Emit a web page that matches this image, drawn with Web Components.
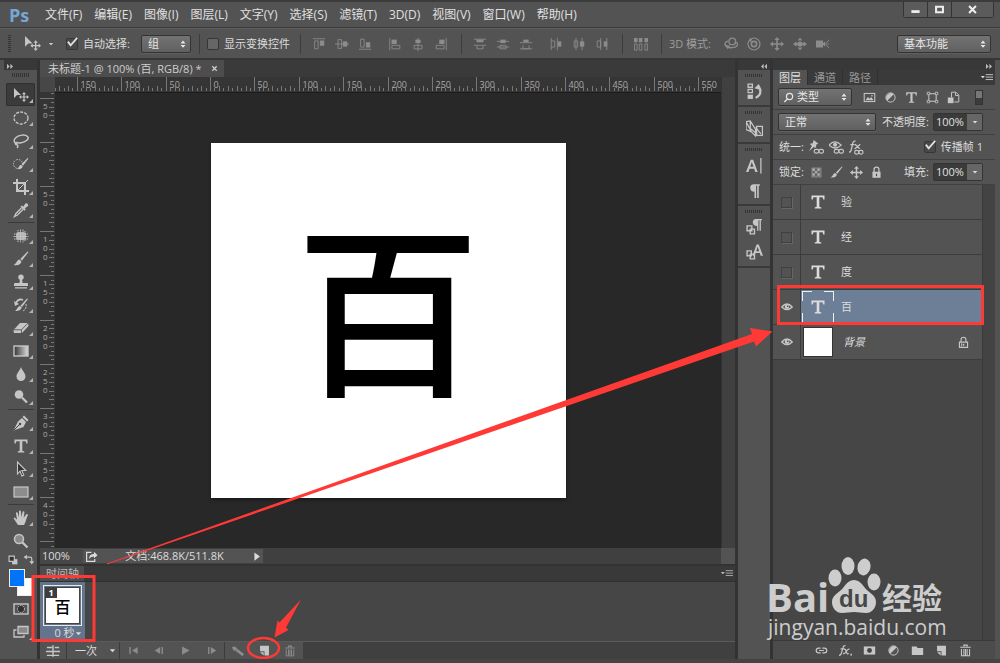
<!DOCTYPE html>
<html lang="zh-CN">
<head>
<meta charset="utf-8">
<title>未标题-1 @ 100%</title>
<style>
html, body {
  margin: 0;
  height: 100%;
}
body {
  font-family: "Open Sans", "Noto Sans CJK SC", sans-serif;
  font-size: 11px;
  line-height: 16px;
  color: #dcdcdc;
  background: #3a3a3a;
  overflow: hidden;
}
</style>
</head>
<body>
<ps-window>
  <ps-menubar slot="menu" items="文件(F),编辑(E),图像(I),图层(L),文字(Y),选择(S),滤镜(T),3D(D),视图(V),窗口(W),帮助(H)"></ps-menubar>
  <ps-options slot="options"></ps-options>
  <ps-toolbar></ps-toolbar>
  <ps-center>
    <ps-document name="未标题-1 @ 100% (百, RGB/8) *">百</ps-document>
    <ps-timeline></ps-timeline>
  </ps-center>
  <ps-dock></ps-dock>
  <ps-layers>
    <ps-layer type="text">验</ps-layer>
    <ps-layer type="text">经</ps-layer>
    <ps-layer type="text">度</ps-layer>
    <ps-layer type="text" visible selected>百</ps-layer>
    <ps-layer type="image" visible locked>背景</ps-layer>
  </ps-layers>
  <ps-watermark slot="over"></ps-watermark>
  <ps-marks slot="over"></ps-marks>
</ps-window>

<script>
// all icons live on a 16x16 grid
const ICONS = {
  move: '<path d="M1 1v10l3-3h4z"/><path d="M11 5l2 2.2h-1.4v2.2h2.2V8L16 10l-2.2 2V10.6h-2.2v2.2H13L11 15l-2-2.2h1.4v-2.2H8.200V12L6 10l2.200-2v1.400h2.200V7.200H9z"/>',
  marquee: '<ellipse cx="8" cy="8" rx="7" ry="6" fill="none" stroke="currentColor" stroke-width="1.3" stroke-dasharray="3 1.200"/>',
  lasso: '<path d="M4 11C1 10 0 7 3 4.500S12 1 14.500 3.500 12 9.500 7 10c-2 .2-3-.8-4-.3s-.6 2 .8 2 1.500 2 .2 3.300" fill="none" stroke="currentColor" stroke-width="1.500"/>',
  quick: '<circle cx="5" cy="8" r="4.500" fill="none" stroke="currentColor" stroke-dasharray="1.500 1.200"/><path d="M15.500 2.500l-5.300 7-1.600-1.400 6-6.100zM8 8.800l1.700 1.600c-.6 2.400-3 3.100-5.700 2.600 2-.8 1.800-3.500 4-4.200z"/>',
  crop: '<path d="M4 0v12h12M0 4h12v12" fill="none" stroke="currentColor" stroke-width="2"/><path d="M5 11L15 1" stroke="currentColor"/>',
  dropper: '<path d="M9 3.500l1.200 1.200 2-3c1.500-1.500 4 1 2.600 2.500l-3 2 1 1.200-1.400 1.300-4-4z"/><path d="M8.500 6L3 11.500 1.500 14.500l3-1.500L10 7.500" fill="none" stroke="currentColor" stroke-width="1.300"/>',
  patch: '<rect x="3" y="4" width="10" height="8" rx="3" opacity=".8"/><path d="M5 2v12M7.500 1.500v13M10 1.500v13M12 3v10M1 6h14M.5 8.500h15M1 11h14" stroke="currentColor" fill="none" stroke-dasharray="1.300 .5"/>',
  brush: '<path d="M15.500 1L9 9.500 7.300 8 14.500.5zM6.500 8.600l2 1.900c-.6 3-3.500 4.300-8 3.500 3-.8 3-4.800 6-5.400z"/>',
  stamp: '<circle cx="8" cy="3.200" r="2.700"/><path d="M7 5h2l.5 4H14q1 0 1 1v2H1v-2q0-1 1-1h4.500zM2 13.200h12v1.300H2z"/>',
  history: '<path d="M15 2l-6 8-1.500-1.300L14 1.500zM7 9l1.700 1.500c-.6 2.500-3 3.800-7 3.300 2.500-.6 2.600-4.300 5.300-4.800z"/><path d="M3 6c2-4 5-4 7-3" fill="none" stroke="currentColor" stroke-width="1.600"/><path d="M1 4l5 3-4 2z"/><path d="M13 7q1 5-3 7" fill="none" stroke="currentColor" stroke-dasharray="2 1"/>',
  eraser: '<path d="M7 3h8l.5 3L9 13H1l-.5-3z"/><path d="M1 9.800h7.500L15 3M8.500 10v3" fill="none" stroke="#606060"/>',
  gradient: '<defs><linearGradient id="g"><stop stop-color="#333"/><stop offset="1" stop-color="#ddd"/></linearGradient></defs><rect x="1" y="3" width="14" height="10" fill="url(#g)" stroke="currentColor" stroke-width="1.400"/>',
  drop: '<path d="M8 1c1 3.500 4.500 6 4.500 9.500a4.500 4.500 0 0 1-9 0C3.500 7 7 4.500 8 1z"/>',
  dodge: '<circle cx="6" cy="5.500" r="4.300"/><path d="M9 8.500l5 5" stroke="currentColor" stroke-width="2.200"/>',
  pen: '<path d="M11 .5L15.500 5l-1.500 1.400-4.500-4.400zM9 3l4 4-2.500 5L.5 15.500 5 6.500z"/><path d="M1 15l5.500-5.500" stroke="#444"/><circle cx="7" cy="9" r="1.200" fill="#444"/>',
  type: '<path d="M1.500 1.500h13v4h-1.200l-.7-2.300H9.300v9.600l2 .6v1.100H4.700v-1.100l2-.6V3.200H3.400l-.7 2.300H1.500z"/>',
  arrow: '<path d="M4.500 1v12l2.500-3 1.800 5 2-.9L8.800 9.500h4z" fill="#333" stroke="currentColor" stroke-width="1.100"/>',
  rect: '<rect x="1" y="3" width="14" height="10" fill="#8d8d8d" stroke="currentColor" stroke-width="1.200"/>',
  hand: '<path d="M5 15L1 9c-.8-1.400.8-2 1.600-.8L4 9.700 3 3.500c-.2-1.500 1.500-1.700 1.900-.3L6 7.500V1.700c0-1.500 1.900-1.500 2 0l.3 5.600L9.500 2c.4-1.300 2.100-1 1.900.4l-.7 5.300L13 4.500c.9-1.200 2.400-.3 1.700 1L13 10c-.5 2-1 3.500-2 5z"/>',
  zoom: '<circle cx="6" cy="6" r="4.500" fill="#8a8a8a" stroke="currentColor" stroke-width="1.500"/><path d="M9.500 9.500l5 5" stroke="currentColor" stroke-width="2.300"/>',
  mask: '<rect x="1" y="3" width="14" height="10" fill="none" stroke="currentColor" stroke-width="1.400"/><circle cx="8" cy="8" r="3.500" fill="#333" stroke="currentColor" stroke-dasharray="1.500 1"/>',
  screens: '<path d="M5 2.500h10v7H5z" fill="#888" stroke="currentColor" stroke-width="1.300"/><path d="M3.500 6H1v7h10v-2" fill="none" stroke="currentColor" stroke-width="1.300"/>',
  reset: '<path d="M7 7h6v6H7z"/><path d="M3.500 3.500h6v6h-6z" fill="#333" stroke="currentColor" stroke-width="1.300"/>',
  swap: '<path d="M4 5h6q2 0 2 2v5" fill="none" stroke="currentColor" stroke-width="1.500"/><path d="M6 2v6L2 5zM9 10h6l-3 4z"/>',
  atop: '<path d="M1 2h14M3 4.500h4v9H3z" fill="none" stroke="currentColor"/><path d="M9 4h5v6H9z"/>',
  avmid: '<path d="M0 8h16M3.500 3h4v10h-4z" fill="none" stroke="currentColor"/><path d="M9 5h5v6H9z"/>',
  abottom: '<path d="M1 14h14M3 2.500h4v9H3z" fill="none" stroke="currentColor"/><path d="M9 6h5v6H9z"/>',
  aleft: '<path d="M2 1v14M4.500 9.500h9v4h-9z" fill="none" stroke="currentColor"/><path d="M4 3h6v5H4z"/>',
  ahmid: '<path d="M8 1v15M3.500 9.500h9v4h-9z" fill="none" stroke="currentColor"/><path d="M5 3h6v4H5z"/>',
  aright: '<path d="M14 1v14M2.500 9.500h9v4h-9z" fill="none" stroke="currentColor"/><path d="M6 3h6v5H6z"/>',
  dtop: '<path d="M1 2.500h14M1 9.500h14M4.500 9.500v4h7v-4" fill="none" stroke="currentColor"/><path d="M4 3h8v3H4z"/>',
  dvmid: '<path d="M1 5h14M1 11.500h14M4.500 9.500h7v4h-7z" fill="none" stroke="currentColor"/><path d="M5 3h6v4H5z"/>',
  dbottom: '<path d="M1 6.500h14M1 13.500h14M4.500 9.500v4h7v-4" fill="none" stroke="currentColor"/><path d="M5 3h6v3H5z"/>',
  dleft: '<path d="M2.500 1v14M9.500 1v14M2.500 4.500h4v7h-4" fill="none" stroke="currentColor"/><path d="M10 5h4v6h-4z"/>',
  dhmid: '<path d="M4.500 1v14M11.500 1v14M2.500 4.500h4v7h-4z" fill="none" stroke="currentColor"/><path d="M9 5h5v6H9z"/>',
  dright: '<path d="M6.500 1v14M13.500 1v14M2.500 4.500h4v7h-4z" fill="none" stroke="currentColor"/><path d="M10 5h4v6h-4z"/>',
  auto: '<path d="M0 1h4v5H0zM5.500 1h4v5h-4zM12 1h4v5h-4z"/><path d="M.5 8h3v7h-3zM6 8h3v7H6zM12.500 8h3v7h-3z" fill="none" stroke="currentColor"/>',
  orbit: '<circle cx="9.500" cy="5" r="3.800" fill="none" stroke="currentColor" stroke-width="1.500"/><path d="M5 4.500C1 5 0 9 3 11s9.500 1.500 12-1-1-4-3-3" fill="none" stroke="currentColor" stroke-width="1.600"/><path d="M2 9l5 1-3 4z"/>',
  roll: '<circle cx="8" cy="8" r="6.800" fill="none" stroke="currentColor" stroke-width="1.300"/><circle cx="8" cy="8" r="3" fill="none" stroke="currentColor" stroke-width="1.800"/><path d="M2 2h4L4 6z"/>',
  pan: '<path d="M8 0l3 3.500H8.900v3.600h3.600V5L16 8l-3.500 3V8.900H8.900v3.600H11L8 16l-3-3.500h2.100V8.900H3.500V11L0 8l3.500-3v2.100h3.600V3.500H5z"/>',
  slide: '<circle cx="8" cy="8" r="3"/><path d="M8 .5L10.500 4h-5zM8 15.500L10.500 12h-5zM0 8l4-3v2h8V5l4 3-4 3V9H4v2z"/>',
  camera: '<path d="M0 4h8v8H0zM8 7l2.500-2v6L8 9z"/><path d="M15 3l-4 5 4 5M13 8h2" fill="none" stroke="currentColor"/>',
  pic: '<rect x="1.500" y="3" width="13" height="10" fill="none" stroke="currentColor" stroke-width="1.300"/><path d="M3 11.500l3-4 2.200 2 1.800-2 3 4z"/><circle cx="11" cy="5.800" r="1"/>',
  adjust: '<circle cx="8" cy="8" r="5.700" fill="#555" stroke="currentColor" stroke-width="1.200"/><path d="M12 4a5.700 5.700 0 0 0-8 8z"/>',
  shape: '<path d="M3.500 3.500h9v9h-9z" fill="none" stroke="currentColor" stroke-width="1.300"/><path d="M1.500 1.500h3v3h-3zM11.500 1.500h3v3h-3zM1.500 11.500h3v3h-3zM11.500 11.500h3v3h-3z" fill="#535353" stroke="currentColor"/>',
  smart: '<path d="M5.500 8V1.500H11l3.500 3.500v8.500H9M10.500 2v3.500H14" fill="none" stroke="currentColor" stroke-width="1.200"/><path d="M1 8h7v7H1z"/>',
  pin: '<path d="M5 0l5 4-2 .5L7 8.500 5 7.500 0 12l3-5.500L1 4l3-.5z"/><rect x="5.500" y="10" width="5" height="4" rx="2" fill="none" stroke="currentColor" stroke-width="1.200"/><rect x="10.500" y="10" width="5" height="4" rx="2" fill="none" stroke="currentColor" stroke-width="1.200"/>',
  eyelink: '<path d="M0 5.500q6-7 13 0-6 6-13 0" fill="none" stroke="currentColor" stroke-width="1.400"/><circle cx="6.500" cy="5" r="2.200"/><rect x="5.500" y="10" width="5" height="4" rx="2" fill="none" stroke="currentColor" stroke-width="1.200"/><rect x="10.500" y="10" width="5" height="4" rx="2" fill="none" stroke="currentColor" stroke-width="1.200"/>',
  fxlink: '<path d="M0 13q2 0 2.500-3L4 3.500Q4.500 .8 7 1.300M1.500 5h4.500M6.500 4.500l5 5M12 4.500l-6 5" fill="none" stroke="currentColor" stroke-width="1.400"/><rect x="6" y="11" width="4.500" height="4" rx="2" fill="none" stroke="currentColor" stroke-width="1.200"/><rect x="10.500" y="11" width="4.500" height="4" rx="2" fill="none" stroke="currentColor" stroke-width="1.200"/>',
  fx: '<path d="M0 14q2.500 0 3-3L5 4.500Q5.500 1.500 8 2M2 6h5M6 6.500q2-1 3 3t3 2M13 6.500q-2-1-4 2.500t-4 2.500" fill="none" stroke="currentColor" stroke-width="1.500"/><path d="M14 12h2v2h-2z"/>',
  checker: '<rect x="2.500" y="2.500" width="11" height="11" fill="#666" stroke="#999"/><path d="M3 3h3v3H3zM9 3h3v3H9zM6 6h3v3H6zM3 9h3v3H3zM9 9h3v3H9z" fill="#aaa"/>',
  cross: '<path d="M8 0l3 3.500H8.900v3.600h3.600V5L16 8l-3.500 3V8.900H8.900v3.600H11L8 16l-3-3.500h2.100V8.900H3.500V11L0 8l3.500-3v2.100h3.600V3.500H5z"/>',
  lock: '<path d="M5 8V4.500q0-3 3-3t3 3V8" fill="none" stroke="currentColor" stroke-width="1.600"/><path d="M3 7h10v7.500H3z"/><path d="M7.300 9.500h1.400v3H7.300z" fill="#444"/>',
  lockthin: '<path d="M5 8V4.500q0-3 3-3t3 3V8M3 7.500h10v6.500H3z" fill="none" stroke="currentColor" stroke-width="1.400"/><path d="M7 9.500h2v2.500H7zM5 9h1v4H5z"/>',
  eye: '<path d="M1 8q7-8 14 0-7 7-14 0z" fill="none" stroke="currentColor" stroke-width="1.700"/><circle cx="8" cy="7.800" r="3"/><circle cx="9" cy="7" r="1" fill="#333"/>',
  link: '<path d="M7 5H4.500a3 3 0 0 0 0 6H7M9 5h2.500a3 3 0 0 1 0 6H9M5 8h6" fill="none" stroke="currentColor" stroke-width="1.500"/>',
  addmask: '<path d="M1 3h14v10H1z"/><circle cx="8" cy="8" r="3" fill="#444"/>',
  folder: '<path d="M1 3h6l1 2h7v8.500H1z"/>',
  page: '<path d="M2.500 2h11v12H8v-5H2.500z"/><path d="M2.500 10H7v4z"/>',
  trash: '<path d="M6 3V1.500h4V3M1.500 4h13" fill="none" stroke="currentColor" stroke-width="1.500"/><path d="M3 6v8.500h10V6M6 6v8M8 6v8M10 6v8" fill="none" stroke="currentColor" stroke-width="1.300"/>',
  histpanel: '<path d="M2 1h4v3H2zM2 6h4v3H2z" fill="none" stroke="currentColor" stroke-width="1.200"/><path d="M1.500 11h5v4h-5z"/><path d="M9 14q6-3 4-8" fill="none" stroke="currentColor" stroke-width="2"/><path d="M8 5l4-4 3 6z"/>',
  notes: '<path d="M0 1.500L4 .8l5 8V15l-4-4zM0 1.500V9l5 2M4 .8V8l5 4" fill="none" stroke="currentColor" stroke-width="1.200"/><rect x="10" y="6" width="5.500" height="8.500" fill="none" stroke="currentColor" stroke-width="1.200"/><path d="M9 7l5 6" stroke="currentColor" stroke-width="1.200"/>',
  charA: '<path d="M0 14L4.500 2.500h2.200L11 14H8.700l-1-3H3.300l-1 3zM4 9.200h3L5.500 4.700z"/><path d="M14 1v14.500" stroke="currentColor" stroke-width="1.200"/>',
  para: '<path d="M7 2h6v1.500h-1V15h-1.500V3.500H9.500V15H8V9a3.500 3.500 0 0 1-1-7z"/>',
  parastyle: '<path d="M9 0h6v1.200h-1V11h-1.300V1.200h-1V11H10.500V6.500A3.200 3.200 0 0 1 9 0z"/><path d="M1 6.500h4.500V11H1zM4 9.500h4V14H4z" fill="none" stroke="currentColor" stroke-width="1.300"/>',
  charstyle: '<path d="M6 11l4-10.500h2L16 11h-2.200l-.8-2.500H9L8.200 11zM9.600 6.800h2.800L11 2.600z"/><path d="M1 6.500h4V11H1zM4 9.500h4V14H4z" fill="none" stroke="currentColor" stroke-width="1.300"/>',
  share: '<path d="M8 3H2v11h10v-3" fill="none" stroke="currentColor" stroke-width="1.500"/><path d="M5 11q0-6 6-6V2l4.500 4.500L11 10V8Q7 8 5 11z"/>',
  convert: '<path d="M1 4h6M0 8.500h16M1 13h14M10 4h5M8 1.500v13" fill="none" stroke="currentColor" stroke-width="1.600"/>',
  first: '<path d="M2 3h2v10H2zM14 3v10L6 8z"/>',
  prev: '<path d="M9 3v10L1 8zM11 3h2v10h-2z"/>',
  play: '<path d="M3 2v12l11-6z"/>',
  next: '<path d="M7 3v10l8-5zM3 3h2v10H3z"/>',
  tween: '<path d="M0 3q4-3 7 2l-3 3q-3-1-4-5zM7 5l9 7-2 3-9-7z"/>',
  menu: '<path d="M1 6h5L3.500 9z"/><path d="M7 4.500h9M7 7.500h9M7 10.500h9" stroke="currentColor"/>',
  dleftarr: '<path d="M7.500 5v7L4 8.500zM12 5v7L8.500 8.500z"/>',
  drightarr: '<path d="M4 5v7l3.500-3.500zM8.500 5v7L12 8.500z"/>',
  caret: '<path d="M2 5h12l-6 7z"/>',
  right: '<path d="M5 2v12l8-6z"/>',
  updown: '<path d="M4 7h8L8 2.500zM4 9.500h8L8 14z"/>',
  search: '<circle cx="9.500" cy="6.500" r="4.500" fill="none" stroke="currentColor" stroke-width="1.700"/><path d="M6.500 10L2 14.500" stroke="currentColor" stroke-width="2"/>',
  min: '<path d="M2 9h12v4H2z"/>',
  max: '<path d="M3 4h10v8H3z" fill="none" stroke="currentColor" stroke-width="3"/>',
  close: '<path d="M3 3l10 10M13 3L3 13" stroke="currentColor" stroke-width="3"/>'
};

const svg = (name, size = 14) =>
  `<svg class="icon" width="${size}" height="${size}" viewBox="0 0 16 16" fill="currentColor" aria-hidden="true">${ICONS[name]}</svg>`;

const BASE = `
  :host { display: block; box-sizing: border-box; }
  *, *::before, *::after { box-sizing: border-box; }
  .icon { display: block; flex: none; }
  button, input, select { font: inherit; color: inherit; }
  .row { display: flex; align-items: center; }
  .fill { flex: 1; }
`;

// shadow root + markup for every element on the page
class PsElement extends HTMLElement {
  constructor() {
    super();
    this.attachShadow({ mode: 'open' });
  }
  connectedCallback() {
    const template = document.createElement('template');
    template.innerHTML = `<style>${BASE}${this.css()}</style>${this.html()}`;
    this.shadowRoot.replaceChildren(template.content.cloneNode(true));
  }
  css() { return ''; }
  html() { return '<slot></slot>'; }
}

class PsButton extends PsElement {
  css() {
    return `
    :host { flex: none; width: 23px; height: 23px; color: #c6c6c6; }
    :host([dim]) { color: #8c8c8c; }
    button { position: relative; display: flex; align-items: center; justify-content: center;
      width: 100%; height: 100%; padding: 0; border: 0; border-radius: 2px; background: none; }
    :host([active]) button { background: #3b3b3b; box-shadow: inset 0 0 0 1px #303030; }
    .flag { position: absolute; right: 2px; bottom: 3px; border: 2px solid transparent;
      border-right-color: #b5b5b5; border-bottom-color: #b5b5b5; }
    `;
  }
  html() {
    return `<button type="button" aria-label="${this.getAttribute('label') || this.getAttribute('icon')}">
      ${svg(this.getAttribute('icon'), this.getAttribute('size') || 14)}
      ${this.hasAttribute('flag') ? '<span class="flag"></span>' : ''}</button>`;
  }
}

class PsSelect extends PsElement {
  css() {
    return `
    :host { flex: none; }
    .box { position: relative; display: flex; align-items: center; height: 18px; color: #e6e6e6;
      border: 1px solid #333; border-radius: 2px; background: linear-gradient(#737373, #606060);
      box-shadow: 0 1px 0 #606060; }
    select { appearance: none; flex: 1; min-width: 0; height: 16px; line-height: 16px; padding: 0 14px 0 6px;
      border: 0; background: none; outline: none; }
    .lead { display: flex; padding-left: 4px; margin-right: -3px; }
    .arrows { position: absolute; right: 2px; pointer-events: none; }
    `;
  }
  html() {
    const lead = this.getAttribute('icon');
    return `<div class="box">${lead ? `<span class="lead">${svg(lead, 11)}</span>` : ''}
      <select aria-label="${this.getAttribute('label')}"><option>${this.getAttribute('value')}</option></select>
      <span class="arrows">${svg('updown', 10)}</span></div>`;
  }
}

class PsCheck extends PsElement {
  css() {
    return `
    :host { flex: none; }
    label { display: flex; align-items: center; gap: 5px; }
    .box { position: relative; display: flex; width: 12px; height: 12px; }
    input { appearance: none; margin: 0; width: 12px; height: 12px; border: 1px solid #363636;
      border-radius: 2px; background: #666; }
    svg { position: absolute; left: 0; top: -2px; display: none; pointer-events: none; }
    input:checked { background: #494949; }
    input:checked + svg { display: block; }
    `;
  }
  html() {
    return `<label><span class="box"><input type="checkbox" ${this.hasAttribute('checked') ? 'checked' : ''}>
      <svg width="13" height="13" viewBox="0 0 14 14"><path d="M2 6l3 4 7-8" fill="none" stroke="#e0e0e0" stroke-width="2"/></svg></span>
      <span><slot></slot></span></label>`;
  }
}

class PsPercent extends PsElement {
  css() {
    return `
    :host { flex: none; }
    .box { display: flex; height: 18px; width: 50px; border: 1px solid #333; border-radius: 2px; }
    input { width: 33px; padding: 0 2px; border: 0; background: #3b3b3b; color: #e0e0e0; outline: none; }
    button { flex: 1; display: flex; align-items: center; justify-content: center; padding: 0; border: 0; background: #666; }
    `;
  }
  html() {
    return `<div class="box"><input type="text" value="100%" aria-label="${this.getAttribute('label')}">
      <button type="button" aria-label="展开">${svg('caret', 6)}</button></div>`;
  }
}

class PsWindow extends PsElement {
  css() {
    return `
    :host { position: relative; display: flex; flex-direction: column; height: 100vh;
      background: #535353; border-top: 2px solid #3b3b3b; border-bottom: 4px solid #444; overflow: hidden; }
    .work { display: flex; flex: 1; min-height: 0; margin: 0 5px 0 4px; gap: 3px; background: #333; }
    `;
  }
  html() {
    return `<slot name="menu"></slot><slot name="options"></slot><div class="work"><slot></slot></div><slot name="over"></slot>`;
  }
}

class PsMenubar extends PsElement {
  css() {
    return `
    :host { height: 26px; padding: 0 6px 0 9px; font-size: 12px; border-bottom: 1px solid #3a3a3a; }
    header { display: flex; align-items: center; height: 100%; }
    .logo { width: 36px; font: bold 18px/24px "Open Sans", sans-serif; color: #76a6d6; }
    nav { display: flex; gap: 12px; flex: 1; }
    a { color: #e0e0e0; text-decoration: none; white-space: nowrap; }
    .sys { display: flex; align-self: flex-start; height: 16px; border: 1px solid #343434; border-top: 0; border-radius: 0 0 3px 3px; color: #eee; }
    .sys button { display: flex; align-items: center; justify-content: center; width: 24px; padding: 0; border: 0;
      border-right: 1px solid #343434; background: #5b5b5b; }
    .sys button:last-child { width: 41px; border-right: 0; }
    `;
  }
  html() {
    const links = this.getAttribute('items').split(',').map(t => `<a href="#">${t}</a>`).join('');
    return `<header><span class="logo">Ps</span><nav>${links}</nav>
      <div class="sys"><button type="button" aria-label="最小化">${svg('min', 11)}</button>
      <button type="button" aria-label="最大化">${svg('max', 11)}</button>
      <button type="button" aria-label="关闭">${svg('close', 11)}</button></div></header>`;
  }
}

class PsOptions extends PsElement {
  css() {
    return `
    :host { height: 32px; padding: 0 9px 0 8px; border-top: 1px solid #5f5f5f; border-bottom: 2px solid #363636; }
    .row { height: 100%; }
    .grip { width: 3px; height: 18px; background: repeating-linear-gradient(#333 0 1px, transparent 1px 2px); }
    .sep { flex: none; width: 1px; height: 20px; margin: 0 7px 0 8px; background: #3c3c3c; }
    .move { display: flex; align-items: center; width: 47px; padding-left: 13px; gap: 7px; color: #c6c6c6; }
    .auto { margin-left: 8px; }
    .controls { margin-right: 2px; }
    .group + .group { margin-left: 7px; }
    .first { width: 50px; margin-left: 11px; }
    .mode { width: 51px; white-space: nowrap; color: #9d9d9d; }
    .space { width: 94px; }
    `;
  }
  html() {
    const group = names => `<div class="row group">${names.map(n => `<ps-button dim icon="${n}"></ps-button>`).join('')}</div>`;
    return `<div class="row"><span class="grip"></span>
      <span class="move">${svg('move', 17)}${svg('caret', 6)}</span>
      <ps-check class="auto" checked>自动选择:</ps-check>
      <ps-select class="first" label="自动选择" value="组"></ps-select>
      <span class="sep"></span>
      <ps-check class="controls">显示变换控件</ps-check>
      <span class="sep"></span>
      ${group(['atop', 'avmid', 'abottom'])}${group(['aleft', 'ahmid', 'aright'])}<span class="sep"></span>
      ${group(['dtop', 'dvmid', 'dbottom'])}${group(['dleft', 'dhmid', 'dright'])}<span class="sep"></span>
      ${group(['auto'])}<span class="sep"></span><span class="mode">3D 模式:</span>
      ${group(['orbit', 'roll', 'pan', 'slide', 'camera'])}<span class="fill"></span>
      <ps-select class="space" label="工作区" value="基本功能"></ps-select></div>`;
  }
}

class PsToolbar extends PsElement {
  css() {
    return `
    :host { flex: none; width: 33px; background: #535353; }
    .head { height: 10px; background: #383838; color: #bbb; }
    .grip { width: 18px; height: 4px; margin: 3px auto 6px; background: repeating-linear-gradient(90deg, #333 0 1px, transparent 1px 2px); }
    .tools { display: flex; flex-direction: column; align-items: center; }
    ps-button { width: 29px; }
    hr { width: 26px; height: 1px; margin: 1px 0; border: 0; background: #3a3a3a; }
    .minis { display: flex; justify-content: center; gap: 2px; height: 15px; }
    .minis ps-button { width: 14px; height: 15px; }
    .swatches { display: grid; grid-template: repeat(3, 9px) / repeat(3, 8px); justify-content: center; margin: 2px 0 1px; }
    .swatches button { padding: 0; border: 1px solid #eee; }
    .fg { grid-area: 1 / 1 / 3 / 3; background: #0074f8; z-index: 1; }
    .bg { grid-area: 2 / 2 / 4 / 4; background: #fff; }
    `;
  }
  html() {
    const t = (names) => names.split(' ').map(n =>
      `<ps-button icon="${n}" size="16" ${n === 'zoom' || n === 'mask' ? '' : 'flag'} ${n === 'move' ? 'active' : ''}></ps-button>`).join('');
    return `<div class="head">${svg('drightarr', 12)}</div><div class="grip"></div>
      <div class="tools">${t('move marquee lasso quick crop dropper')}<hr>
      ${t('patch brush stamp history eraser gradient drop dodge')}<hr>
      ${t('pen type arrow rect')}<hr>${t('hand zoom')}</div>
      <div class="minis"><ps-button icon="reset" size="14"></ps-button><ps-button icon="swap" size="13"></ps-button></div>
      <div class="swatches"><button type="button" class="fg" aria-label="前景色"></button><button type="button" class="bg" aria-label="背景色"></button></div>
      <div class="tools">${t('mask screens')}</div>`;
  }
}

class PsCenter extends PsElement {
  css() {
    return `:host { display: flex; flex-direction: column; flex: 1; min-width: 0; gap: 2px; }`;
  }
}

// Ruler whose zero sits half a page before the middle of the view.
class PsRuler extends PsElement {
  css() {
    return `
    :host { background: #353535; overflow: hidden; }
    svg { display: block; }
    line { stroke: #777; }
    text { font: 9px "Open Sans", sans-serif; fill: #aaa; }
    :host([axis=y]) text { font-size: 8px; }
    `;
  }
  html() {
    const vertical = this.getAttribute('axis') === 'y';
    const from = Number(this.getAttribute('from'));
    const to = Number(this.getAttribute('to'));
    let marks = '';
    for (let u = from; u <= to; u += 5) {
      const p = Math.round(u * 0.8875 - 178) + 0.5;
      const len = u % 50 === 0 ? 14 : u % 10 === 0 ? 5 : 3;
      marks += vertical
        ? `<line x1="${14 - len}" x2="14" y1="${p}" y2="${p}"/>`
        : `<line y1="${14 - len}" y2="14" x1="${p}" x2="${p}"/>`;
      // a label needs room before the ruler ends
      if (u % 50 === 0 && u + 15 <= to) {
        const label = String(Math.abs(u));
        marks += vertical
          ? [...label].map((d, i) => `<text x="3" y="${p + 10 + i * 9}">${d}</text>`).join('')
          : `<text x="${p + 3}" y="11">${label}</text>`;
      }
    }
    return `<svg width="100%" height="100%"><svg ${vertical ? 'y' : 'x'}="50%" overflow="visible">${marks}</svg></svg>`;
  }
}

class PsDocument extends PsElement {
  css() {
    return `
    :host { display: flex; flex-direction: column; flex: 1; min-height: 0; }
    .tabs { display: flex; height: 17px; background: #3a3a3a; }
    .tab { display: flex; align-items: center; gap: 7px; padding: 0 4px 0 8px; background: #4d4d4d; white-space: nowrap; color: #ccc; }
    .tab button { display: flex; padding: 2px; border: 0; background: none; }
    .view { flex: 1; min-height: 0; display: grid; grid-template: 15px minmax(0, 1fr) / 15px minmax(0, 1fr) 14px; }
    .corner { background: #474747; }
    .scroll { grid-area: 1 / 3 / 3 / 4; background: #404040; border-left: 1px solid #333; }
    .stage { display: flex; align-items: center; justify-content: center; background: #282828; overflow: hidden;
      border-top: 1px solid #1c1c1c; }
    .page { display: flex; align-items: center; justify-content: center; width: 355px; height: 355px; padding-bottom: 36px;
      background: #fff; color: #000; font: 500 184px/319px "Noto Sans CJK SC", sans-serif; box-shadow: 0 2px 3px #1a1a1a; }
    .status { display: flex; align-items: center; height: 16px; background: #404040; }
    .zoom { width: 43px; padding-left: 2px; background: #474747; }
    .info { display: flex; align-items: center; width: 180px; height: 14px; padding: 0 1px 0 2px; background: #535353; }
    .info span { flex: 1; text-align: center; }
    .end { width: 14px; height: 16px; background: #535353; }
    `;
  }
  html() {
    return `<div class="tabs"><div class="tab"><span>${this.getAttribute('name')}</span>
        <button type="button" aria-label="关闭文档">${svg('close', 7)}</button></div></div>
      <div class="view"><div class="corner"></div><ps-ruler axis="x" from="-175" to="565"></ps-ruler>
        <div class="scroll"></div><ps-ruler axis="y" from="-55" to="455"></ps-ruler>
        <div class="stage"><div class="page"><slot></slot></div></div></div>
      <div class="status"><span class="zoom">100%</span>
        <div class="info">${svg('share', 13)}<span>文档:468.8K/511.8K</span>${svg('right', 11)}</div>
        <div class="fill"></div><div class="end"></div></div>`;
  }
}

class PsTimeline extends PsElement {
  css() {
    return `
    :host { flex: none; background: #464646; }
    .tabs { display: flex; align-items: center; height: 15px; background: #393939; padding-right: 2px; color: #bbb; }
    .tab { width: 44px; height: 15px; padding-left: 6px; background: #4d4d4d; white-space: nowrap; }
    .frames { height: 60px; border-top: 1px solid #303030; }
    .frame { display: flex; flex-direction: column; align-items: center; width: 45px; height: 59px; padding-top: 3px; background: #64748c; }
    .thumb { position: relative; width: 39px; height: 41px; border: 1px solid #e8e8e8; padding: 1px; }
    .pic { display: flex; align-items: center; justify-content: center; height: 100%; background: #fff; color: #000;
      font: 500 16px/20px "Noto Sans CJK SC", sans-serif; border: 1px solid #444; }
    .num { position: absolute; left: 1px; top: 1px; width: 12px; height: 11px; background: #3d3d3d; font: bold 9px/11px "Open Sans", sans-serif; text-align: center; color: #fff; }
    .time { display: flex; align-items: center; height: 14px; padding: 0 0 0 11px; border: 0; background: none; }
    .bar { display: flex; align-items: center; height: 18px; background: #404040; border-top: 1px solid #5a5a5a; }
    .controls { display: flex; align-items: center; height: 17px; background: #535353; }
    .controls ps-button { width: 26px; height: 17px; }
    .sep { width: 1px; height: 17px; background: #3c3c3c; }
    .loop { position: relative; display: flex; align-items: center; width: 52px; }
    select { appearance: none; width: 100%; height: 16px; line-height: 16px; padding: 0 0 0 8px; border: 0; background: none; }
    .loop svg { position: absolute; right: 3px; pointer-events: none; }
    `;
  }
  html() {
    return `<div class="tabs"><span class="tab">时间轴</span><span class="fill"></span>${svg('menu', 13)}</div>
      <div class="frames"><div class="frame"><div class="thumb"><div class="pic">百</div><span class="num">1</span></div>
        <button class="time" type="button">0 秒${svg('caret', 7)}</button></div></div>
      <div class="bar"><div class="controls"><ps-button icon="convert"></ps-button><span class="sep"></span>
        <div class="loop"><select aria-label="循环"><option>一次</option></select>${svg('caret', 7)}</div><span class="sep"></span>
        <ps-button dim icon="first" size="11"></ps-button><ps-button dim icon="prev" size="11"></ps-button>
        <ps-button dim icon="play" size="11"></ps-button><ps-button dim icon="next" size="11"></ps-button><span class="sep"></span>
        <ps-button dim icon="tween" size="12"></ps-button><ps-button icon="page" size="13"></ps-button>
        <ps-button dim icon="trash" size="12"></ps-button></div></div>`;
  }
}

class PsDock extends PsElement {
  css() {
    return `
    :host { flex: none; width: 32px; background: #535353; }
    .head { display: flex; justify-content: flex-end; height: 10px; background: #383838; color: #bbb; }
    section { display: flex; flex-direction: column; align-items: center; padding: 1px 0; border-bottom: 2px solid #3a3a3a; }
    .grip { width: 18px; height: 3px; margin: 3px 0 2px; background: repeating-linear-gradient(90deg, #333 0 1px, transparent 1px 2px); }
    ps-button { height: 25px; }
    `;
  }
  html() {
    const group = names => `<section><span class="grip"></span>${names.map(n => `<ps-button icon="${n}" size="17"></ps-button>`).join('')}</section>`;
    return `<div class="head">${svg('dleftarr', 12)}</div>
      ${group(['histpanel'])}${group(['notes'])}${group(['charA', 'para'])}${group(['parastyle', 'charstyle'])}`;
  }
}

class PsLayers extends PsElement {
  css() {
    return `
    :host { display: flex; flex-direction: column; flex: none; width: 222px; background: #535353; }
    .head { display: flex; justify-content: flex-end; height: 10px; background: #383838; color: #bbb; }
    .tabs { display: flex; align-items: center; height: 15px; background: #3a3a3a; padding-right: 2px; }
    .tabs button { width: 35px; height: 15px; line-height: 15px; padding: 0; border: 0; border-right: 1px solid #303030; background: none; color: #999; }
    .tabs button[aria-selected=true] { background: #535353; color: #e0e0e0; }
    .line { display: flex; align-items: center; height: 25px; padding: 0 12px 0 5px; border-bottom: 1px solid #404040; white-space: nowrap; }
    .line ps-button { width: 20px; }
    .filters { display: flex; gap: 1px; margin-left: 7px; }
    .type { width: 74px; }
    .blend { width: 98px; }
    .text { padding-left: 1px; width: 28px; }
    .num { margin-right: 4px; }
    .toggle { width: 8px; height: 15px; padding: 0; border: 1px solid #333; background: linear-gradient(#777 50%, #3c3c3c 50%); }
    .list { flex: 1; margin-right: 12px; background: #464646; border-right: 1px solid #3a3a3a; }
    .wrap { display: flex; flex-direction: column; flex: 1; background: #434343; }
    .foot { display: flex; justify-content: flex-end; height: 19px; padding-right: 18px; background: #4c4c4c; border-top: 1px solid #393939; }
    .foot ps-button { width: 24px; height: 18px; }
    `;
  }
  html() {
    const b = (names, size = 14) => names.split(' ').map(n => `<ps-button icon="${n}" size="${size}"></ps-button>`).join('');
    return `<div class="head">${svg('drightarr', 12)}</div>
      <div class="tabs" role="tablist"><button role="tab" aria-selected="true">图层</button><button role="tab">通道</button><button role="tab">路径</button>
        <span class="fill"></span>${svg('menu', 13)}</div>
      <div class="line"><ps-select class="type" icon="search" label="滤镜类型" value="类型"></ps-select>
        <div class="filters">${b('pic adjust type shape smart', 13)}</div><span class="fill"></span><button class="toggle" type="button" aria-label="图层滤镜开关"></button></div>
      <div class="line"><ps-select class="blend" label="混合模式" value="正常"></ps-select><span class="fill"></span>
        <span class="num">不透明度:</span><ps-percent label="不透明度"></ps-percent></div>
      <div class="line"><span class="text">统一:</span>${b('pin eyelink fxlink', 15)}<span class="fill"></span>
        <ps-check checked>传播帧 1</ps-check></div>
      <div class="line"><span class="text">锁定:</span>${b('checker brush cross lock', 13)}<span class="fill"></span>
        <span class="num">填充:</span><ps-percent label="填充"></ps-percent></div>
      <div class="wrap"><div class="list"><slot></slot></div></div>
      <div class="foot">${b('link fx addmask adjust folder page trash', 13)}</div>`;
  }
}

class PsLayer extends PsElement {
  css() {
    return `
    :host { display: flex; height: 35px; background: #535353; border-bottom: 1px solid #3c3c3c; }
    .eye { display: flex; align-items: center; justify-content: center; width: 28px; padding: 0; border: 0;
      border-right: 1px solid #3c3c3c; background: none; color: #c6c6c6; }
    .none { width: 11px; height: 11px; border: 1px solid #404040; box-shadow: 1px 1px 0 #666; }
    .body { display: flex; flex: 1; align-items: center; gap: 7px; padding-left: 1px; }
    :host([selected]) .body { background: #6d7f96; }
    .thumb { display: flex; align-items: center; justify-content: center; width: 32px; height: 32px; }
    :host([selected]) .thumb { background:
      linear-gradient(#eee, #eee) 0 0 / 10px 1px, linear-gradient(#eee, #eee) 0 0 / 1px 10px,
      linear-gradient(#eee, #eee) 100% 0 / 10px 1px, linear-gradient(#eee, #eee) 100% 0 / 1px 10px,
      linear-gradient(#eee, #eee) 0 100% / 10px 1px, linear-gradient(#eee, #eee) 0 100% / 1px 10px,
      linear-gradient(#eee, #eee) 100% 100% / 10px 1px, linear-gradient(#eee, #eee) 100% 100% / 1px 10px;
      background-repeat: no-repeat; }
    .paper { width: 28px; height: 28px; background: #fff; outline: 1px solid #333; }
    :host([locked]) .name { font-style: italic; padding-left: 2px; }
    .lock { padding-right: 12px; color: #c6c6c6; }
    `;
  }
  html() {
    const thumb = this.getAttribute('type') === 'text' ? svg('type', 16) : '<span class="paper"></span>';
    return `<button class="eye" type="button" aria-label="可见性">${this.hasAttribute('visible') ? svg('eye', 12) : '<span class="none"></span>'}</button>
      <div class="body"><span class="thumb">${thumb}</span><span class="name"><slot></slot></span><span class="fill"></span>
      ${this.hasAttribute('locked') ? `<span class="lock">${svg('lockthin', 13)}</span>` : ''}</div>`;
  }
}

class PsWatermark extends PsElement {
  css() {
    return `
    :host { position: absolute; right: 52px; bottom: 16px; width: 182px; height: 88px; pointer-events: none; }
    svg { display: block; fill: #cdcdcd; }
    .big { font: bold 40px "Open Sans", sans-serif; }
    .du { font: bold 24px "Liberation Sans", sans-serif; fill: #474747; }
    .cn { font: bold 30px "Noto Sans CJK SC", sans-serif; }
    .url { font: 21px "Open Sans", sans-serif; }
    `;
  }
  html() {
    return `<svg width="182" height="88" viewBox="766 555 182 88">
      <text class="big" x="766" y="612">Bai</text>
      <ellipse cx="835" cy="578" rx="6.500" ry="8.500"/><ellipse cx="848" cy="566" rx="6.500" ry="9"/>
      <ellipse cx="864" cy="567" rx="6.500" ry="8.500" transform="rotate(12 864 567)"/><ellipse cx="874" cy="582" rx="6.500" ry="8.500"/>
      <path d="M854 580c5 0 8 4 11 8 4 5 11 7 11 14 0 6-4 11-10 11-5 0-7-1-12-1s-7 1-12 1c-6 0-10-5-10-11 0-7 7-9 11-14 3-4 6-8 11-8z"/>
      <text class="du" x="839" y="607">du</text>
      <text class="cn" x="882" y="609">经验</text>
      <text class="url" x="768" y="635">jingyan.baidu.com</text></svg>`;
  }
}

class PsMarks extends PsElement {
  css() {
    return `
    :host { position: absolute; inset: -2px 0 -4px; pointer-events: none; }
    svg { display: block; width: 100%; height: 100%; }
    `;
  }
  html() {
    return `<svg viewBox="0 0 1000 663" preserveAspectRatio="none" fill="#ff3a36" aria-hidden="true">
      <g fill="none" stroke="#ff3a36" stroke-width="3"><rect x="33" y="576.500" width="61" height="64"/>
      <rect x="778.500" y="286.500" width="204" height="37"/><ellipse cx="263.500" cy="648" rx="15.500" ry="10" stroke-width="2.500"/></g>
      <path d="M107 563.500L752 334l-2-6 22.500 3.500-16.500 15-2-5L107 564.500z"/>
      <path d="M301 599.500l-15 28 2.500 2.500-14 7.500 3-17 2 2z"/></svg>`;
  }
}

customElements.define('ps-button', PsButton);
customElements.define('ps-select', PsSelect);
customElements.define('ps-check', PsCheck);
customElements.define('ps-percent', PsPercent);
customElements.define('ps-menubar', PsMenubar);
customElements.define('ps-options', PsOptions);
customElements.define('ps-toolbar', PsToolbar);
customElements.define('ps-center', PsCenter);
customElements.define('ps-ruler', PsRuler);
customElements.define('ps-document', PsDocument);
customElements.define('ps-timeline', PsTimeline);
customElements.define('ps-dock', PsDock);
customElements.define('ps-layer', PsLayer);
customElements.define('ps-layers', PsLayers);
customElements.define('ps-watermark', PsWatermark);
customElements.define('ps-marks', PsMarks);
customElements.define('ps-window', PsWindow);
</script>
</body>
</html>
